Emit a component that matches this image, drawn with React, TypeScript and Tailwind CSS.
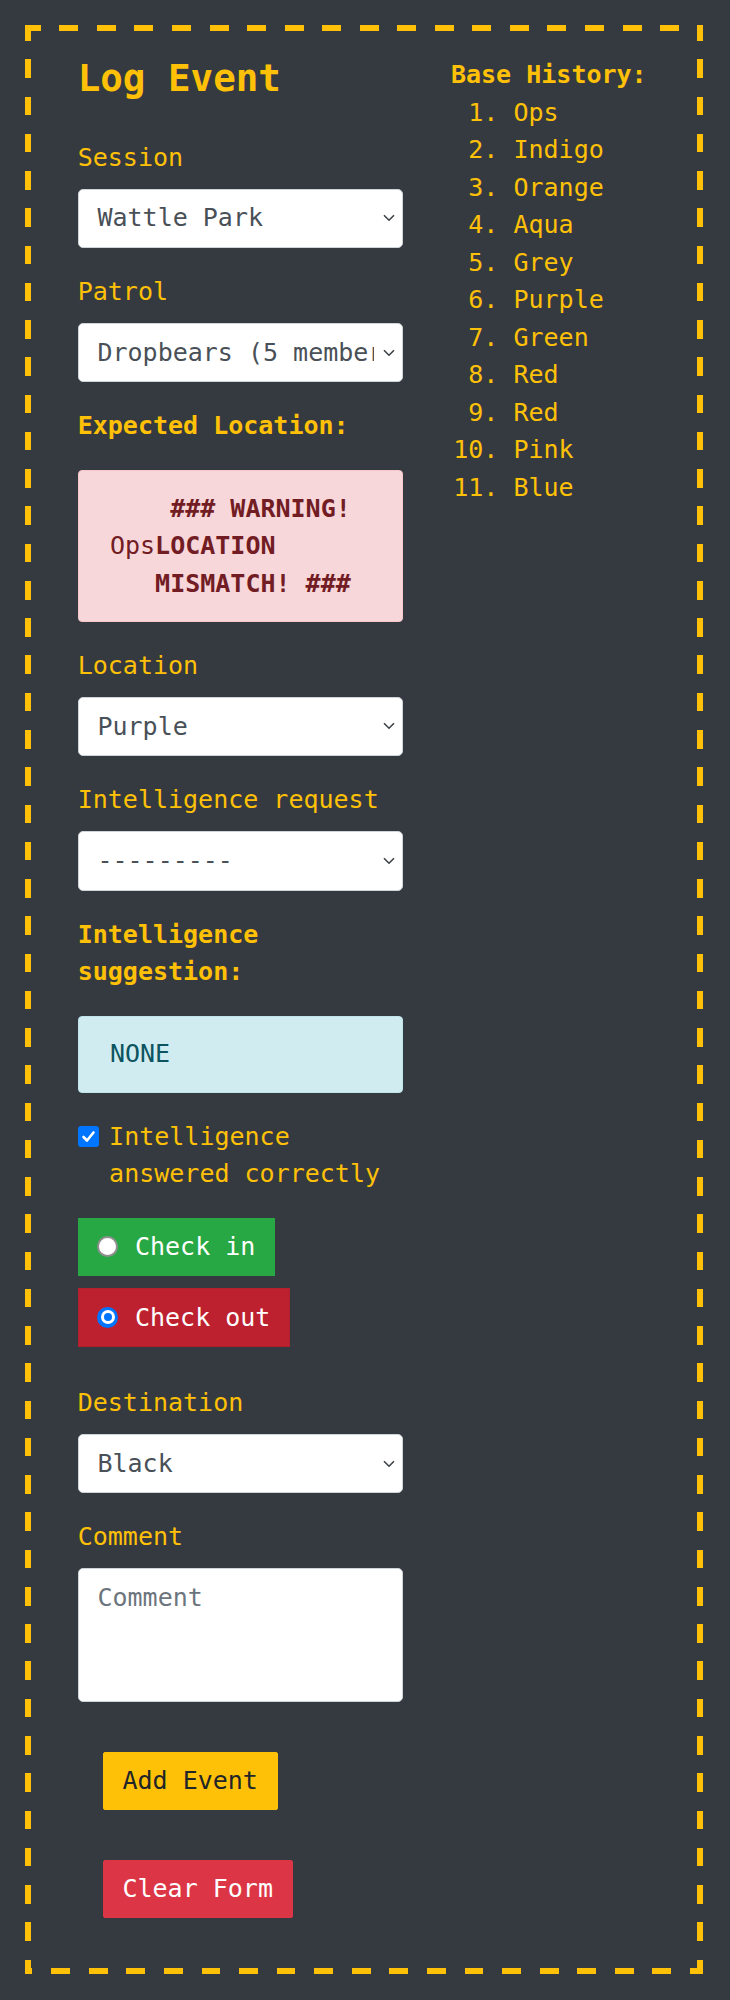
import React from "react";

const FONT = { fontFamily: '"DejaVu Sans Mono", "Liberation Mono", monospace' };

function Chevron() {
  return (
    <svg
      className="pointer-events-none absolute right-[8px] top-1/2 -translate-y-1/2"
      width="12"
      height="8"
      viewBox="0 0 12 8"
      fill="none"
    >
      <polyline points="1,1.2 6,6.2 11,1.2" stroke="#3c4148" strokeWidth="1.6" />
    </svg>
  );
}

function SelectField({
  label,
  value,
  options,
}: {
  label: string;
  value: string;
  options: string[];
}) {
  return (
    <div className="mb-[25px] flex flex-col">
      <label className="mb-[12.5px] leading-[37.5px] text-[#ffc107]">{label}</label>
      <div className="relative">
        <select
          defaultValue={value}
          className="block h-[59.4px] w-full appearance-none rounded-[5px] border border-[#ced4da] bg-white pl-[18.75px] pr-[28px] text-[25px] leading-[37.5px] text-[#495057] outline-none"
          style={FONT}
        >
          {options.map((o) => (
            <option key={o} value={o}>
              {o}
            </option>
          ))}
        </select>
        <Chevron />
      </div>
    </div>
  );
}

function Radio({ checked }: { checked: boolean }) {
  if (checked) {
    return (
      <span className="mr-[16.5px] flex h-[21px] w-[21px] shrink-0 items-center justify-center rounded-full bg-[#0075ff]">
        <span className="h-[14px] w-[14px] rounded-full border-[3px] border-white bg-[#0075ff]" />
      </span>
    );
  }
  return (
    <span className="mr-[16.5px] h-[21px] w-[21px] shrink-0 rounded-full border-[2px] border-[#8f8f8f] bg-white" />
  );
}

export default function App() {
  const history = [
    "Ops",
    "Indigo",
    "Orange",
    "Aqua",
    "Grey",
    "Purple",
    "Green",
    "Red",
    "Red",
    "Pink",
    "Blue",
  ];
  const locations = [
    "Ops",
    "Indigo",
    "Orange",
    "Aqua",
    "Grey",
    "Purple",
    "Green",
    "Red",
    "Pink",
    "Blue",
    "Black",
  ];

  return (
    <div
      className="min-h-[2000px] bg-[#343a40] pl-[25px] pt-[25px] pb-[25px] text-[25px] leading-[37.5px] text-[#ffc107]"
      style={FONT}
    >
      <div className="relative flex w-[678px] p-[6px]">
        {/* dashed frame */}
        <div className="pointer-events-none absolute left-0 right-0 top-0 h-[6px] bg-[repeating-linear-gradient(90deg,#ffc107_0px_15.8px,transparent_15.8px_34.35px,#ffc107_34.35px_37.55px)]" />
        <div className="pointer-events-none absolute bottom-0 left-0 right-0 h-[6px] bg-[repeating-linear-gradient(90deg,#ffc107_0px_7.4px,transparent_7.4px_26.2px,#ffc107_26.2px_37.58px)]" />
        <div className="pointer-events-none absolute bottom-0 left-0 top-0 w-[6px] bg-[repeating-linear-gradient(180deg,#ffc107_0px_15.6px,transparent_15.6px_34.3px,#ffc107_34.3px_37.26px)]" />
        <div className="pointer-events-none absolute bottom-0 right-0 top-0 w-[6px] bg-[repeating-linear-gradient(180deg,#ffc107_0px_15.6px,transparent_15.6px_34.3px,#ffc107_34.3px_37.26px)]" />

        {/* Left column: form */}
        <div className="ml-[46.7px] flex w-[325.6px] flex-col pb-[25px] pt-[25px]">
          <h4 className="mb-[37.5px] text-[37.5px] font-bold leading-[45px]">Log Event</h4>

          <SelectField label="Session" value="Wattle Park" options={["Wattle Park"]} />
          <SelectField
            label="Patrol"
            value="Dropbears (5 members)"
            options={["Dropbears (5 members)"]}
          />

          <div className="mb-[25px] font-bold">Expected Location:</div>
          <div className="mb-[25px] rounded-[4px] border border-[#f5c6cb] bg-[#f8d7da] px-[31.25px] py-[18.75px] text-[#721c24]">
            <div className="whitespace-pre font-bold">{"    ### WARNING!"}</div>
            <div className="whitespace-pre">
              Ops<b>LOCATION</b>
            </div>
            <div className="whitespace-pre font-bold">{"   MISMATCH! ###"}</div>
          </div>

          <SelectField label="Location" value="Purple" options={locations} />
          <SelectField
            label="Intelligence request"
            value="---------"
            options={["---------", ...locations]}
          />

          <div className="mb-[25px] font-bold">Intelligence suggestion:</div>
          <div className="mb-[25px] rounded-[4px] border border-[#bee5eb] bg-[#d1ecf1] px-[31.25px] py-[18.75px] text-[#0c5460]">
            NONE
          </div>

          <label className="mb-[25px] flex items-start">
            <span className="mr-[10.4px] mt-[8px] flex h-[21px] w-[21px] shrink-0 items-center justify-center rounded-[3px] bg-[#0075ff]">
              <svg width="15" height="15" viewBox="0 0 15 15" fill="none">
                <polyline
                  points="2.5,8 6,11.5 12.5,3.5"
                  stroke="white"
                  strokeWidth="2.6"
                  strokeLinecap="round"
                  strokeLinejoin="round"
                />
              </svg>
            </span>
            <span>Intelligence answered correctly</span>
          </label>

          <label className="mb-[12.5px] flex w-fit items-center border border-[#28a745] bg-[#28a745] px-[18.75px] py-[9.375px] text-white">
            <Radio checked={false} />
            <span>Check in</span>
          </label>
          <label className="mb-[37.5px] flex w-fit items-center border border-[#b21f2d] bg-[#bd2130] px-[18.75px] py-[9.375px] text-white">
            <Radio checked={true} />
            <span>Check out</span>
          </label>

          <SelectField label="Destination" value="Black" options={locations} />

          <div className="flex flex-col">
            <label className="mb-[12.5px] leading-[37.5px]">Comment</label>
            <textarea
              rows={3}
              placeholder="Comment"
              className="block h-[133.25px] w-full resize-none rounded-[5px] border border-[#ced4da] bg-white px-[18.75px] py-[9.375px] text-[25px] leading-[37.5px] text-[#495057] outline-none placeholder:text-[#6c757d]"
              style={FONT}
            />
          </div>

          <button
            className="ml-[25px] mt-[50px] w-fit rounded-[2px] border border-[#ffc107] bg-[#ffc107] px-[18.75px] py-[9.375px] text-[25px] leading-[37.5px] text-[#212529]"
            style={FONT}
          >
            Add Event
          </button>
          <button
            className="mb-[25px] ml-[25px] mt-[50px] w-fit rounded-[2px] border border-[#dc3545] bg-[#dc3545] px-[18.75px] py-[9.375px] text-[25px] leading-[37.5px] text-white"
            style={FONT}
          >
            Clear Form
          </button>
        </div>

        {/* Right column: base history */}
        <div className="ml-[47.7px] flex flex-col pt-[25px]">
          <div className="font-bold">Base History:</div>
          <ol className="list-decimal pl-[62.5px]">
            {history.map((h, i) => (
              <li key={i}>{h}</li>
            ))}
          </ol>
        </div>
      </div>
    </div>
  );
}
